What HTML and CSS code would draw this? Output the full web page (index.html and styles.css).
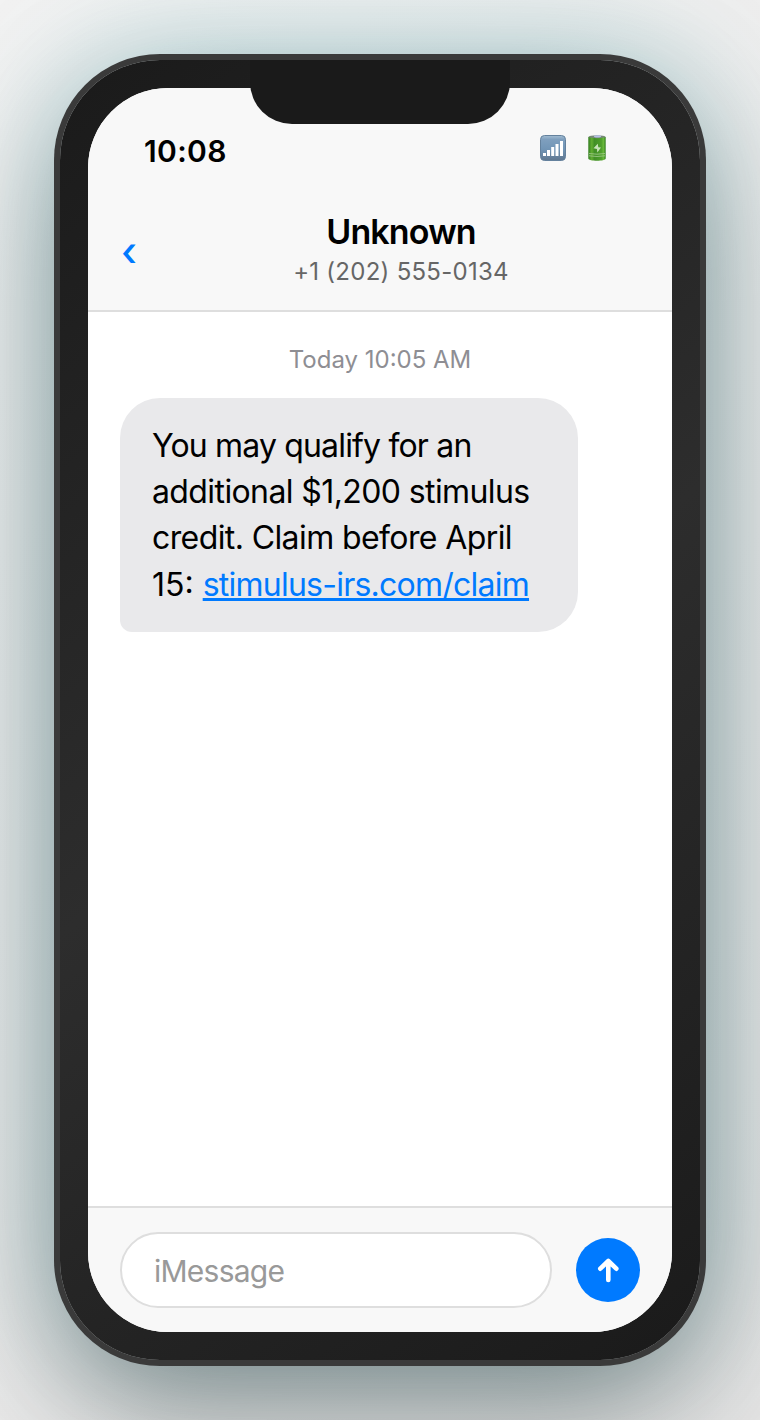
FILE: index.html
```html
<!doctype html>
<html lang="en">
  <head>
    <meta charset="UTF-8" />
    <meta name="viewport" content="width=device-width, initial-scale=1.0" />
    <title>Messages</title>
    <link rel="stylesheet" href="styles.css">
  </head>
  <body>
    <div class="phone">
      <div class="notch"></div>
      <div class="screen">
        <div class="status-bar">
          <span class="time">10:08</span>
          <div class="status-icons">
            <svg class="signal" width="26" height="26" viewBox="0 0 26 26">
              <defs>
                <linearGradient id="signal-fill" x1="0" y1="0" x2="0" y2="1">
                  <stop offset="0" stop-color="#a3bdd2" />
                  <stop offset="0.16" stop-color="#7f9fbe" />
                  <stop offset="0.55" stop-color="#7195b6" />
                  <stop offset="1" stop-color="#60778f" />
                </linearGradient>
              </defs>
              <rect x="0.5" y="0.5" width="25" height="25" rx="4" fill="url(#signal-fill)" stroke="#64819d" />
              <path d="M3 18h3v3H3zM7 15h3v6H7zM11.2 12h3v9h-3zM15.5 9h3v12h-3zM20 6h3v15h-3z" fill="#fff" />
            </svg>
            <svg class="battery" width="18" height="26" viewBox="0 0 18 26">
              <defs>
                <linearGradient id="battery-fill">
                  <stop offset="0" stop-color="#327e20" />
                  <stop offset="0.2" stop-color="#62ae32" />
                  <stop offset="0.35" stop-color="#418f26" />
                  <stop offset="0.75" stop-color="#4f9f2c" />
                  <stop offset="0.87" stop-color="#69b83b" />
                  <stop offset="1" stop-color="#327d21" />
                </linearGradient>
              </defs>
              <path d="M0.3 2v21.5c0 3 17.4 3 17.4 0V2z" fill="url(#battery-fill)" />
              <ellipse cx="9" cy="1.7" rx="8.5" ry="1.5" fill="#768878" />
              <ellipse cx="9.5" cy="1.4" rx="3.5" ry="1.1" fill="#b7c1e6" />
              <path d="M1 18.5q8 1.4 16 0M1 20.8q8 1.4 16 0" fill="none" stroke="#a5cc91" stroke-width="0.8" />
              <path d="M9.8 8.8L5.5 13.2l3.5.8.3 3.4 3.7-4.8-2.7-.4z" fill="#c8e3ba" />
            </svg>
          </div>
        </div>

        <header class="chat-header">
          <span class="back">‹</span>
          <div class="contact">
            <div class="contact-name">Unknown</div>
            <div class="contact-number">+1 (202) 555-0134</div>
          </div>
        </header>

        <main class="messages">
          <div class="timestamp">Today 10:05 AM</div>
          <div class="bubble">
            <div class="line line-first">You may qualify for an</div>
            <div class="line">additional $1,200 stimulus</div>
            <div class="line">credit. Claim before April</div>
            <div class="line line-last">15: <a class="link" href="#">stimulus-irs.com/claim</a></div>
          </div>
        </main>

        <footer class="input-bar">
          <input class="message-input" type="text" placeholder="iMessage" aria-label="Message">
          <button class="send" aria-label="Send">
            <svg width="24" height="28" viewBox="0 0 24 28" fill="none" stroke="#fff" stroke-width="4.6" stroke-linecap="round" stroke-linejoin="round">
              <path d="M12.3 24V5.5M4.3 12.7L12.3 5l8 7.7" />
            </svg>
          </button>
        </footer>
      </div>
    </div>
  </body>
</html>
```
FILE: styles.css
```css
* {
  box-sizing: border-box;
}

body {
  margin: 0;
  height: 1420px;
  padding: 60px;
  overflow: hidden;
  background: linear-gradient(135deg, #f2f2f2 0%, #e6e6e6 100%);
  font-family: Inter, "Liberation Sans", sans-serif;
}

.phone {
  position: relative;
  width: 640px;
  height: 1300px;
  padding: 28px;
  border-radius: 100px;
  background: linear-gradient(145deg, #1a1a1a 0%, #2d2d2d 50%, #1a1a1a 100%);
  box-shadow:
    0 0 0 6px #3a3a3a,
    0 50px 130px rgba(0, 0, 0, 0.39),
    0 0 120px rgba(0, 165, 180, 0.26);
}

.notch {
  position: absolute;
  z-index: 1;
  top: 0;
  left: 190px;
  width: 260px;
  height: 64px;
  border-radius: 0 0 42px 42px;
  background: #1a1a1a;
}

.screen {
  display: flex;
  flex-direction: column;
  height: 100%;
  overflow: hidden;
  border-radius: 80px;
  background: #fff;
}

.status-bar {
  display: flex;
  justify-content: space-between;
  height: 104px;
  padding: 45px 66px 0 56px;
  background: #f8f8f8;
}

.time {
  font-size: 30px;
  font-weight: 600;
  letter-spacing: 0.35px;
  line-height: 36px;
}

.status-icons {
  display: flex;
  gap: 22px;
  padding-top: 2px;
}

.chat-header {
  display: flex;
  align-items: center;
  height: 120px;
  padding: 0 32px;
  border-bottom: 2px solid #dedede;
  background: #f8f8f8;
}

.back {
  width: 42px;
  padding: 2px 0 0 1px;
  color: #007aff;
  font-size: 40px;
  font-weight: 500;
  line-height: 40px;
}

.contact {
  flex: 1;
  text-align: center;
}

.contact-name {
  margin: -4px 0 4px;
  font-size: 34px;
  font-weight: 600;
  letter-spacing: -0.85px;
  line-height: 42px;
}

.contact-number {
  color: #666;
  font-size: 24px;
  letter-spacing: 0.27px;
  line-height: 30px;
}

.messages {
  flex: 1;
  padding: 33px 32px;
}

.timestamp {
  margin-bottom: 23px;
  color: #8e8e93;
  font-size: 24px;
  line-height: 30px;
  text-align: center;
}

.bubble {
  width: 458px;
  height: 234px;
  padding: 25px 32px 23px;
  border-radius: 40px 40px 40px 12px;
  background: #e9e9eb;
  font-size: 32px;
  line-height: 46px;
  white-space: nowrap;
}

.line {
  letter-spacing: -0.6px;
}

.line-first {
  letter-spacing: -0.83px;
}

.line-last {
  letter-spacing: 0;
  line-height: 48px;
}

.link {
  color: #007aff;
  letter-spacing: -0.76px;
}

.input-bar {
  display: flex;
  align-items: center;
  gap: 24px;
  height: 126px;
  padding: 0 32px;
  border-top: 2px solid #dedede;
  background: #f8f8f8;
}

.message-input {
  flex: 1;
  min-width: 0;
  height: 76px;
  padding: 2px 32px 0;
  border: 2px solid #dedede;
  border-radius: 40px;
  background: #fff;
  font-family: inherit;
  font-size: 30px;
  letter-spacing: -0.75px;
}

.message-input::placeholder {
  color: #999;
}

.send {
  display: flex;
  align-items: center;
  justify-content: center;
  width: 64px;
  height: 64px;
  padding: 0;
  border: 0;
  border-radius: 50%;
  background: #007aff;
}
```
